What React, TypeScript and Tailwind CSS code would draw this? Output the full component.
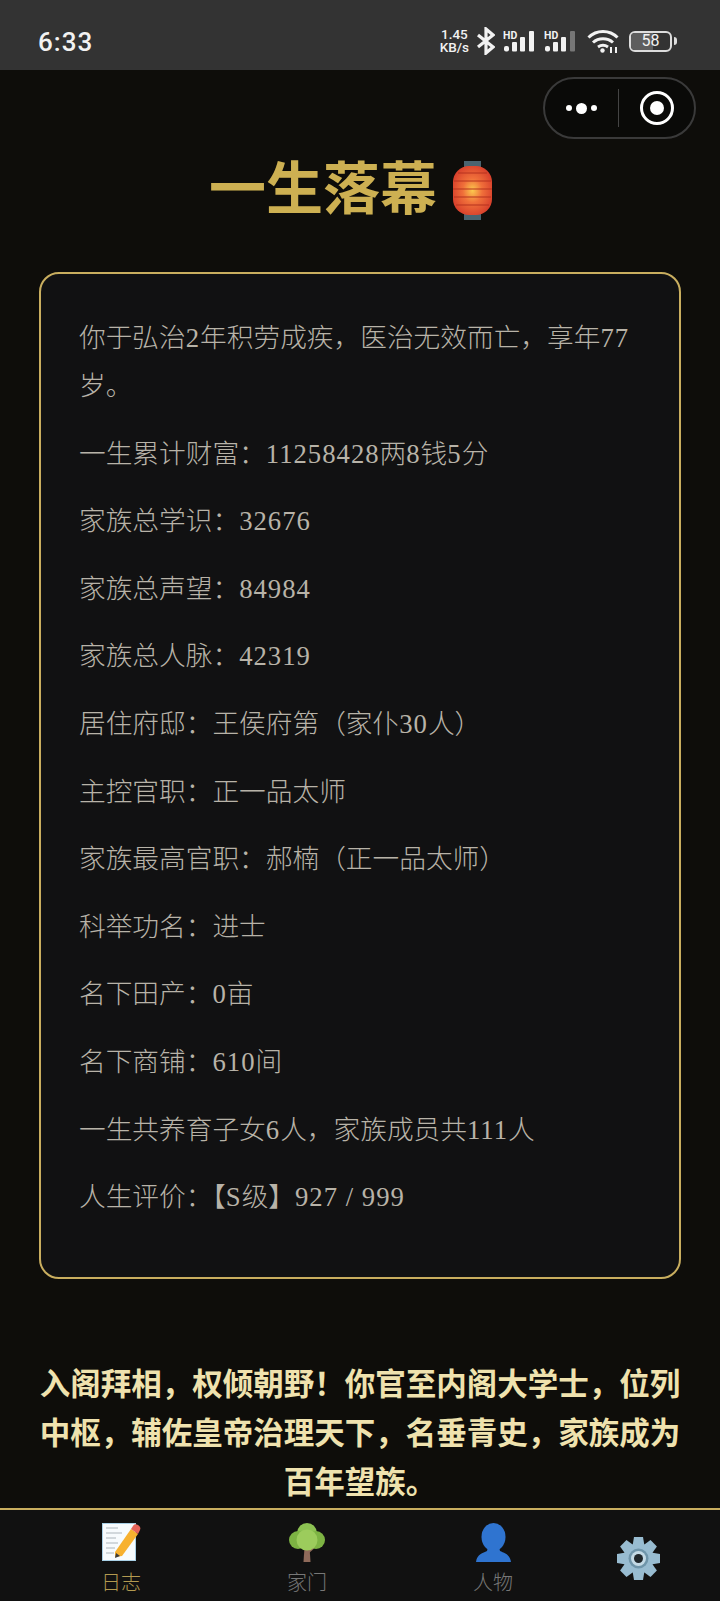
const lines = [
  "一生累计财富：11258428两8钱5分",
  "家族总学识：32676",
  "家族总声望：84984",
  "家族总人脉：42319",
  "居住府邸：王侯府第（家仆30人）",
  "主控官职：正一品太师",
  "家族最高官职：郝楠（正一品太师）",
  "科举功名：进士",
  "名下田产：0亩",
  "名下商铺：610间",
  "一生共养育子女6人，家族成员共111人",
  "人生评价：【S级】927 / 999",
];

// latin runs sit a little wider than Liberation Serif in the picture
function Line({ text }: { text: string }) {
  return (
    <p className="mb-[19.6px]">
      {text.split(/([0-9A-Za-z /]+)/).map((part, i) =>
        i % 2 === 1 ? (
          <span key={i} className="tracking-[1px]">
            {part}
          </span>
        ) : (
          part
        )
      )}
    </p>
  );
}

function Signal({ dim }: { dim?: boolean }) {
  return (
    <svg width="34" height="24" viewBox="0 0 34 24" className="block">
      <text x="0" y="10" fill="#f2f2f2" fontSize="10.500" fontWeight="700" fontFamily="Roboto, sans-serif">HD</text>
      <rect x="1" y="17" width="5" height="5.500" rx="2" fill="#f2f2f2" />
      <rect x="9" y="13" width="5" height="9.500" rx="1" fill="#f2f2f2" />
      <rect x="17" y="8" width="5" height="14.500" rx="1" fill="#f2f2f2" />
      <rect x="26" y="2" width="5" height="20.500" rx="1" fill={dim ? "#777777" : "#f2f2f2"} />
    </svg>
  );
}

function StatusBar() {
  return (
    <div className="h-[70px] bg-[#333333] flex items-start justify-between pl-[38px] pr-[43px] font-['Roboto',sans-serif] text-[#f2f2f2] shrink-0">
      <span className="mt-[26px] text-[26px] leading-[32px] font-medium tracking-[1px]">6:33</span>
      <div className="flex items-center mt-[27px] h-[28px]">
        <div className="text-[13.5px] leading-[13.5px] text-center font-medium">
          <div>1.45</div>
          <div>KB/s</div>
        </div>
        <svg width="18" height="28" viewBox="0 0 18 28" fill="none" stroke="#f2f2f2" strokeWidth="3.200" className="ml-[8px]">
          <path d="M1 8l15 12-7 6V2l7 6L1 20" />
        </svg>
        <div className="flex ml-[8px] gap-[7px]">
          <Signal />
          <Signal dim />
        </div>
        <svg width="32" height="24" viewBox="0 0 32 24" fill="none" stroke="#f2f2f2" strokeWidth="3" className="ml-[9px]">
          <path d="M1.500 8.500c8-8 21-8 29 0" />
          <path d="M6 13.500c5.500-5 14.500-5 20 0" />
          <path d="M11 18c3-2 7-2 10 0" />
          <circle cx="15.500" cy="21.500" r="2.200" fill="#f2f2f2" stroke="none" />
          <path d="M24 18v6M29 18v6" strokeWidth="2" />
        </svg>
        <div className="flex items-center ml-[10px]">
          <div className="relative w-[43px] h-[21px] border-2 border-[#dddddd] rounded-[6px] overflow-hidden flex items-center justify-center text-[16px] leading-none">
            <div className="absolute left-0 top-0 bottom-0 w-[22px] bg-[#5e5e5e]" />
            <span className="relative">58</span>
          </div>
          <div className="w-[3px] h-[8px] bg-[#dddddd] rounded-r-sm ml-[2px]" />
        </div>
      </div>
    </div>
  );
}

function Capsule() {
  return (
    <div className="absolute top-[7px] right-[24px] w-[153px] h-[62px] rounded-full border-2 border-[#3a3a3a] bg-[#0a0a08] flex items-center">
      <div className="w-[73px] flex items-center justify-center gap-[4px]">
        <span className="w-[6px] h-[6px] rounded-full bg-white" />
        <span className="w-[11px] h-[11px] rounded-full bg-white" />
        <span className="w-[6px] h-[6px] rounded-full bg-white" />
      </div>
      <div className="w-px h-[38px] bg-[#444444]" />
      <div className="flex-1 flex items-center justify-center">
        <div className="w-[34px] h-[34px] rounded-full border-[3px] border-white flex items-center justify-center">
          <span className="w-[14px] h-[14px] rounded-full bg-white" />
        </div>
      </div>
    </div>
  );
}

function Lantern() {
  return (
    <svg width="39" height="59" viewBox="0 0 39 59" className="shrink-0 ml-[16px]">
      <defs>
        <radialGradient id="lg" cx="50%" cy="50%" r="55%">
          <stop offset="0%" stopColor="#fbc94e" />
          <stop offset="45%" stopColor="#f0703a" />
          <stop offset="100%" stopColor="#d8402c" />
        </radialGradient>
      </defs>
      <rect x="11" y="0" width="17" height="6" fill="#4a6470" />
      <rect x="11" y="53" width="17" height="6" fill="#4a6470" />
      <rect x="0" y="5" width="39" height="49" rx="16" fill="url(#lg)" />
      <g stroke="#b5321f" strokeWidth="1.200" fill="none">
        <path d="M5 12h29M1 20h37M0 28h39M1 36h37M3 44h33" />
      </g>
    </svg>
  );
}

function MemoIcon() {
  return (
    <svg width="39" height="38" viewBox="0 0 39 38">
      <rect x="0.500" y="0.500" width="33" height="37" fill="#f7fbfd" stroke="#a9d0e6" />
      <g stroke="#9aa4aa" strokeWidth="0.800">
        <path d="M4 5h12M4 10h16M4 15h10M4 20h12M4 25h9M4 30h8" />
      </g>
      <path d="M13 29L29 6l7 5-16 22-7 1z" fill="#f7b12f" />
      <path d="M29 6l2-3c1-2 3-2 5-1s3 3 2 5l-2 4z" fill="#e8645a" />
      <path d="M14 30l4 3-5 2z" fill="#3c3c3c" />
    </svg>
  );
}

function TreeIcon() {
  return (
    <svg width="36" height="39" viewBox="0 0 36 39">
      <path d="M15.500 24h5l1 15h-7z" fill="#8f6a5a" />
      <path d="M19 27l7-5 1 2-7 6zM17 28l-6-6 2-1 5 5z" fill="#8f6a5a" />
      <circle cx="18" cy="10" r="10" fill="#8cc152" />
      <circle cx="9" cy="17" r="9" fill="#7db343" />
      <circle cx="27" cy="17" r="9" fill="#7db343" />
      <circle cx="18" cy="17" r="10.500" fill="#9ccc5c" />
    </svg>
  );
}

function PersonIcon() {
  return (
    <svg width="35" height="39" viewBox="0 0 35 39" fill="#2f74d0">
      <ellipse cx="17.500" cy="14" rx="12" ry="14" />
      <path d="M12 24h11l1 4c4 2 10 3 11 11H0c1-8 7-9 11-11z" />
    </svg>
  );
}

function GearIcon() {
  const teeth = [0, 45, 90, 135, 180, 225, 270, 315];
  return (
    <svg width="43" height="43" viewBox="0 0 43 43" className="block">
      <g fill="#98bcd1">
        {teeth.map((a) => (
          <path key={a} d="M17 0h9l2 12H15z" transform={`rotate(${a} 21.500 21.500)`} />
        ))}
      </g>
      <circle cx="21.500" cy="21.500" r="15" fill="#98bcd1" />
      <circle cx="21.500" cy="21.500" r="10" fill="#6f95aa" />
      <circle cx="21.500" cy="21.500" r="7.500" fill="#c3d9e5" />
      <circle cx="21.500" cy="21.500" r="4.500" fill="#20262a" />
    </svg>
  );
}

function TabBar() {
  return (
    <div className="h-[93px] shrink-0 border-t-2 border-[#c9ae5f] bg-[#111111] pl-[28px] pr-[29px] grid grid-cols-[186px_186px_186px_1fr] font-['Noto_Sans_CJK_SC',sans-serif] text-[20px] leading-[26px] font-light">
      <div className="flex flex-col items-center pt-[13px]">
        <MemoIcon />
        <span className="mt-[8px] text-[#b39a50]">日志</span>
      </div>
      <div className="flex flex-col items-center pt-[13px]">
        <TreeIcon />
        <span className="mt-[7px] text-[#777777]">家门</span>
      </div>
      <div className="flex flex-col items-center pt-[13px]">
        <PersonIcon />
        <span className="mt-[7px] text-[#777777]">人物</span>
      </div>
      <div className="flex justify-center pt-[27px]">
        <GearIcon />
      </div>
    </div>
  );
}

export default function App() {
  return (
    <div className="w-[720px] h-[1601px] flex flex-col overflow-hidden bg-[#0e0d0a]">
      <StatusBar />
      <div className="relative flex-1 overflow-hidden px-[39px] font-['Liberation_Serif','Noto_Sans_CJK_SC',serif]">
        <Capsule />
        <div className="flex items-center justify-center h-[60px] mt-[90px] pr-[19px]">
          <h1 className="text-[57px] leading-[60px] font-bold text-[#cdb052]">一生落幕</h1>
          <Lantern />
        </div>
        <div className="mt-[52px] h-[1007px] rounded-[20px] border-2 border-[#c9ae5f] bg-[#111112] pl-[38px] pr-[30px] pt-[40px] text-[26.7px] leading-[48px] font-light text-[#b8b3a8]">
          <p className="mb-[19.6px]">
            你于弘治<span className="tracking-[1px]">2</span>年积劳成疾，医治无效而亡，享年<span className="tracking-[1px]">77</span>岁。
          </p>
          {lines.map((line) => (
            <Line key={line} text={line} />
          ))}
        </div>
        <p className="mt-[82px] text-center text-[30.5px] leading-[49px] font-bold text-[#efe2ae]">
          入阁拜相，权倾朝野！你官至内阁大学士，位列中枢，辅佐皇帝治理天下，名垂青史，家族成为百年望族。
        </p>
      </div>
      <TabBar />
    </div>
  );
}
